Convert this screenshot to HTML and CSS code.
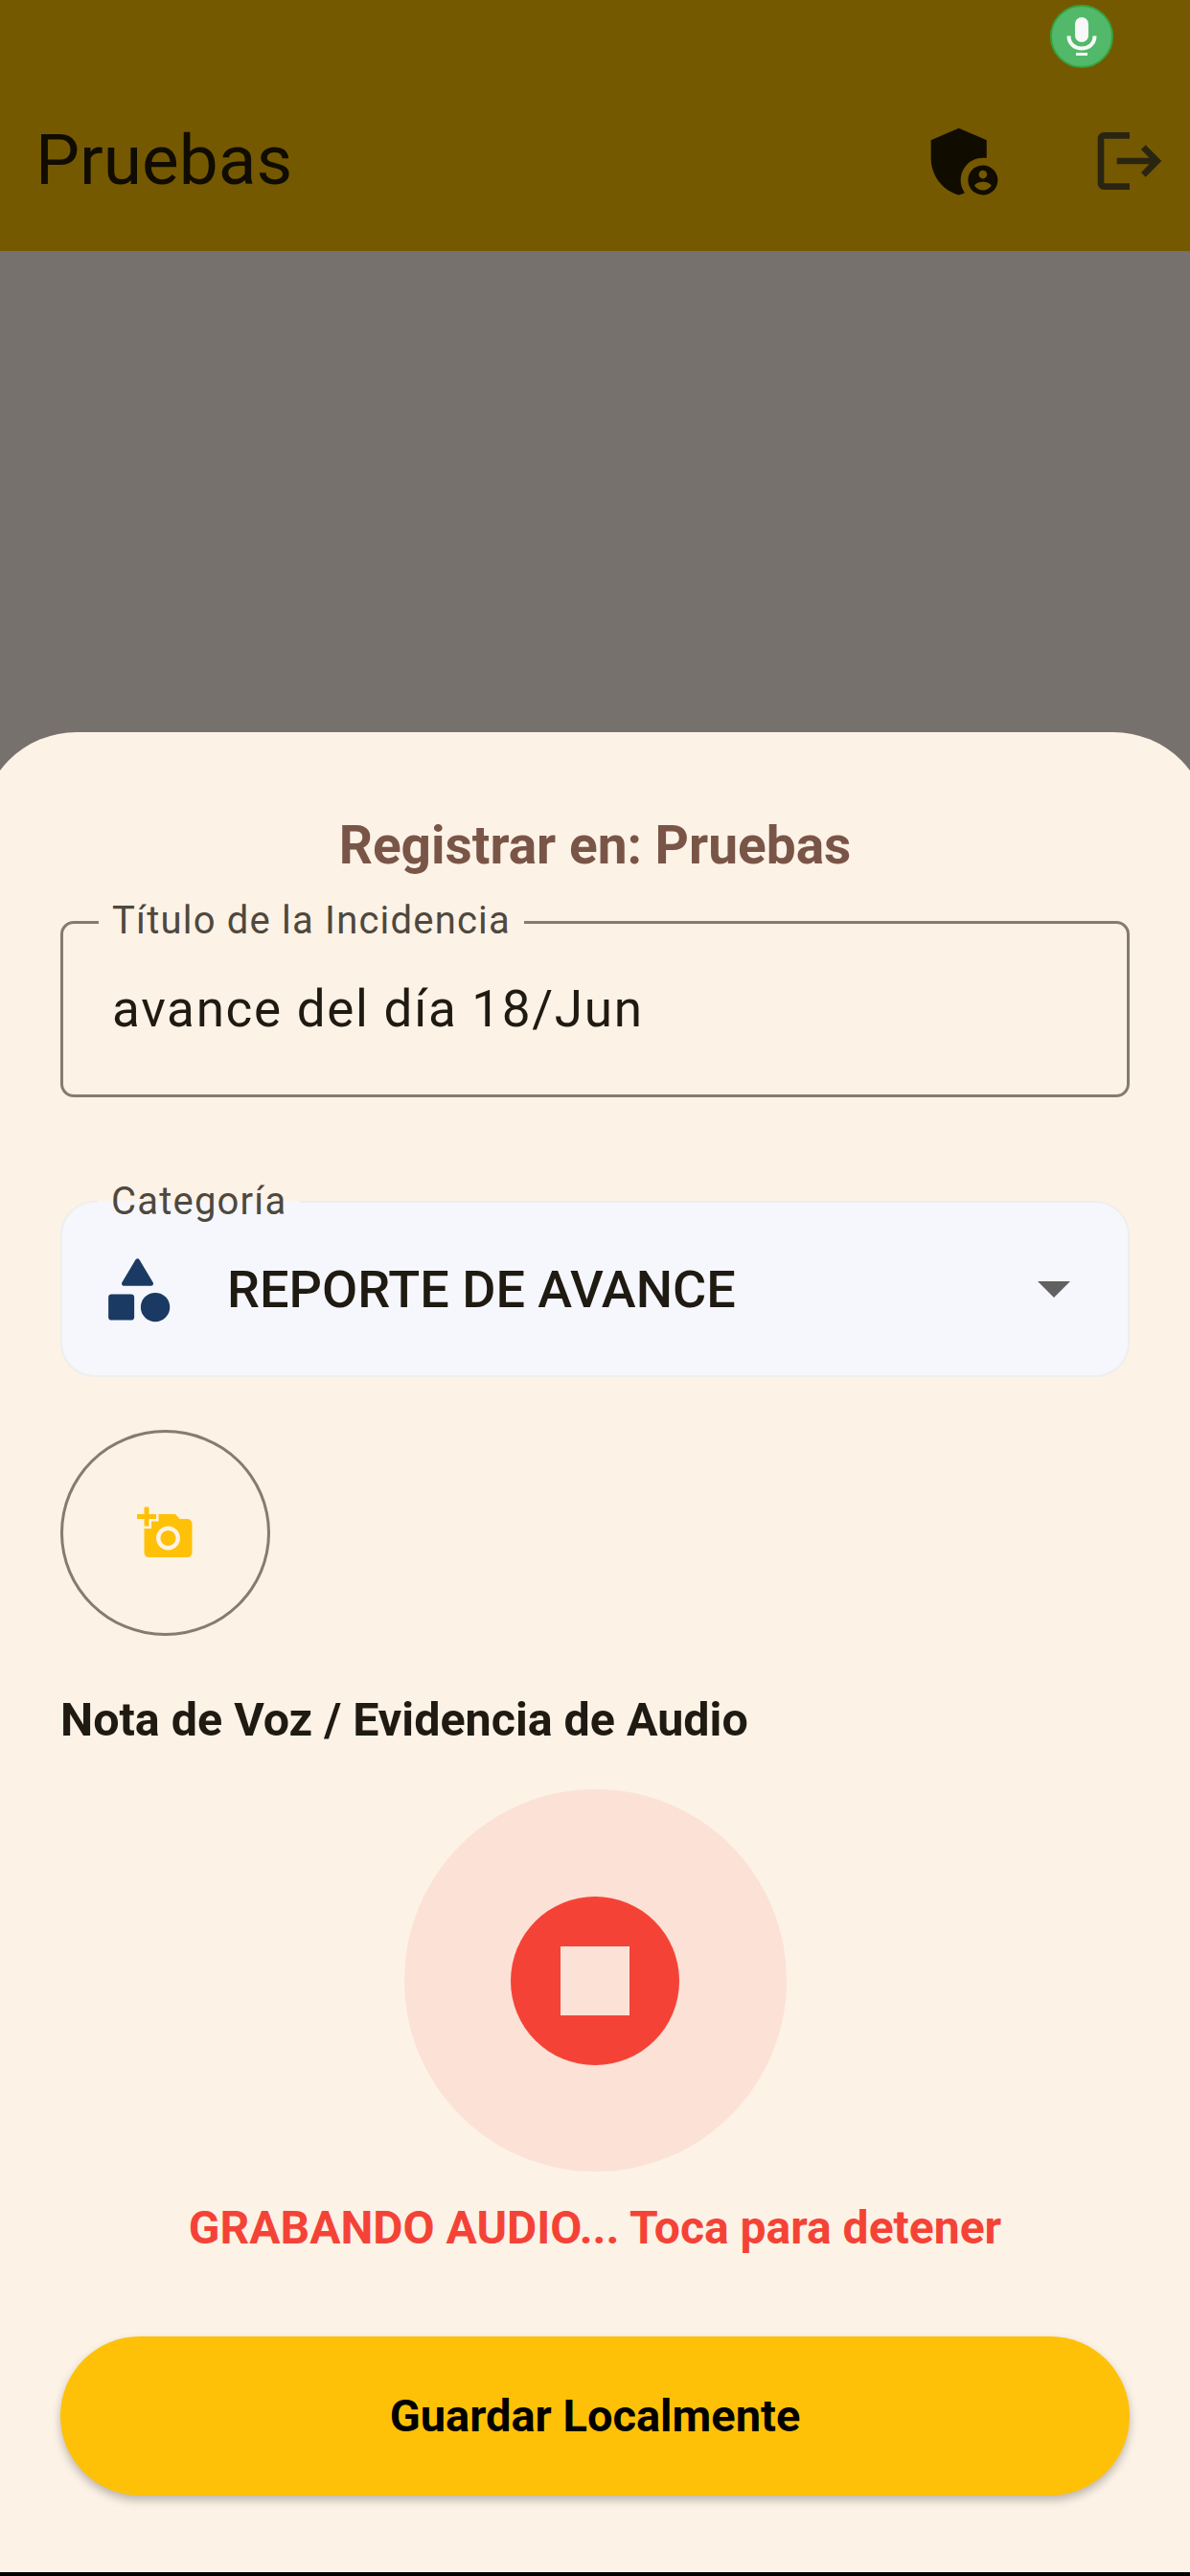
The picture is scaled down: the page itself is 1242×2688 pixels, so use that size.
FILE: index.html
```html
<!DOCTYPE html>
<html lang="es">

<head>
    <meta charset="UTF-8">
    <title>Pruebas</title>
    <link rel="stylesheet" href="styles.css">
</head>

<body>
    <div class="page">
        <!-- barra superior, oscurecida por el velo -->
        <header class="appbar">
            <h1 class="appbar-title">Pruebas</h1>
            <svg class="icon-admin" viewBox="0 0 24 24">
                <path d="M17 11c.34 0 .67.04 1 .09V6.27L10.5 3 3 6.27v4.91c0 4.54 3.2 8.79 7.5 9.82.55-.13 1.08-.32 1.6-.55-.69-.98-1.1-2.17-1.1-3.45 0-3.31 2.69-6 6-6z" />
                <path d="M17 13c-2.21 0-4 1.79-4 4s1.79 4 4 4 4-1.79 4-4-1.79-4-4-4zm0 1.38c.62 0 1.12.51 1.12 1.12s-.51 1.12-1.12 1.12-1.12-.51-1.12-1.12.5-1.12 1.12-1.12zm0 5.37c-.93 0-1.74-.46-2.24-1.17.05-.72 1.51-1.08 2.24-1.08s2.19.36 2.24 1.08c-.5.71-1.31 1.17-2.24 1.17z" />
            </svg>
            <svg class="icon-logout" viewBox="0 0 24 24">
                <path d="M17 7l-1.41 1.41L18.17 11H8v2h10.17l-2.58 2.58L17 17l5-5zM4 5h8V3H4c-1.1 0-2 .9-2 2v14c0 1.1.9 2 2 2h8v-2H4V5z" />
            </svg>
        </header>

        <!-- indicador de micrófono del sistema -->
        <div class="mic-dot">
            <svg viewBox="0 0 66 66">
                <rect class="mic-fill" x="26" y="13" width="14" height="26" rx="7" />
                <path class="mic-arc" d="M19.5 32.500 C19.500 41 26 45.500 33 45.500 C40 45.500 46.500 41 46.500 32.500" />
                <rect class="mic-fill" x="27" y="50" width="12" height="3" />
            </svg>
        </div>

        <div class="scrim"></div>

        <main class="sheet">
            <h2 class="sheet-title">Registrar en: Pruebas</h2>

            <div class="field field-input">
                <span class="field-label">Título de la Incidencia</span>
                <span class="field-value">avance del día 18/Jun</span>
            </div>

            <div class="field field-select">
                <span class="field-label label-notch">Categoría</span>
                <svg class="icon-category" viewBox="0 0 24 24">
                    <path d="M12 3.200 7.800 10.200h8.400z" stroke="#1b3a63" stroke-width="1.400" stroke-linejoin="round" />
                    <rect x="3" y="13.500" width="8" height="8" rx="1" />
                    <circle cx="17.500" cy="17.500" r="4.500" />
                </svg>
                <span class="select-value">REPORTE DE AVANCE</span>
                <i class="caret"></i>
            </div>

            <div class="photo-btn">
                <svg class="icon-photo" viewBox="0 0 24 24">
                    <path d="M3 4V1h2v3h3v2H5v3H3V6H0V4h3zm3 6V7h3V4h7l1.830 2H21c1.100 0 2 .9 2 2v12c0 1.100-.9 2-2 2H5c-1.100 0-2-.9-2-2V10h3zm7 9c2.760 0 5-2.240 5-5s-2.240-5-5-5-5 2.240-5 5 2.240 5 5 5zm-3.200-5c0 1.770 1.430 3.200 3.200 3.200s3.200-1.430 3.200-3.200-1.430-3.200-3.200-3.200-3.200 1.430-3.200 3.200z" />
                </svg>
            </div>

            <p class="audio-label">Nota de Voz / Evidencia de Audio</p>

            <div class="rec-halo">
                <div class="rec-btn"><i class="rec-stop"></i></div>
            </div>

            <p class="rec-status">GRABANDO AUDIO... Toca para detener</p>

            <div class="save-btn">Guardar Localmente</div>
        </main>

        <div class="nav-edge"></div>
    </div>
</body>

</html>
```

FILE: styles.css
```css
* {
    box-sizing: border-box;
}

html,
body {
    margin: 0;
    padding: 0;
}

body {
    font-family: Roboto, "Noto Sans", sans-serif;
    background-color: #000;
}

.page {
    position: relative;
    display: flex;
    flex-direction: column;
    width: 1242px;
    height: 2688px;
    overflow: hidden;
    background-color: #76716d;
}

/* barra superior */

.appbar {
    display: flex;
    align-items: center;
    flex: none;
    height: 262px;
    padding: 72px 23px 0 37px;
    background-color: #755900;
}

.appbar-title {
    flex: 1;
    margin: 0;
    font-size: 73px;
    font-weight: 400;
    line-height: 76px;
    color: #100c02;
}

.icon-admin {
    width: 93px;
    height: 93px;
    margin: 2px 86px 0 0;
    fill: #100c00;
}

.icon-logout {
    width: 80px;
    height: 80px;
    margin-top: 2px;
    fill: #2a2412;
}

.mic-dot {
    position: absolute;
    top: 5px;
    left: 1096px;
    width: 66px;
    height: 66px;
    border: 2px solid #37a33f;
    border-radius: 50%;
    background-color: #52b96a;
}

.mic-dot svg {
    display: block;
    width: 66px;
    height: 66px;
    margin: -2px;
}

.mic-fill {
    fill: #f7f9f7;
}

.mic-arc {
    fill: none;
    stroke: #f7f9f7;
    stroke-width: 4;
}

/* velo */

.scrim {
    flex: 1;
}

/* hoja inferior: un poco mas ancha que la pantalla, las esquinas quedan cortadas */

.sheet {
    flex: none;
    margin: 0 -20px;
    padding: 88px 83px 80px 83px;
    border-radius: 100px 100px 0 0;
    background-color: #fdf2e6;
}

.sheet-title {
    margin: 0 0 49px;
    font-size: 55px;
    font-weight: 700;
    line-height: 60px;
    text-align: center;
    color: #795548;
}

.field {
    position: relative;
    display: flex;
    align-items: center;
    height: 184px;
}

.field-input {
    padding-left: 51px;
    border: 3px solid #857c6e;
    border-radius: 14px;
}

.field-value {
    font-size: 53px;
    letter-spacing: 1.7px;
    color: #1f1a12;
}

.field-label {
    position: absolute;
    top: -28px;
    left: 37px;
    padding: 0 14px;
    font-size: 40px;
    line-height: 50px;
    letter-spacing: 1.2px;
    color: #4f483d;
    background-color: #fdf2e6;
}

.field-select {
    margin-top: 108px;
    padding-left: 38px;
    border: 2px solid #eeeeee;
    border-radius: 36px;
    background-color: #f5f7fc;
}

.label-notch {
    top: -26px;
    background-color: #f5f7fc;
    background-image: linear-gradient(#fdf2e6 24px, #f5f7fc 24px);
}

.icon-category {
    flex: none;
    width: 81px;
    height: 81px;
    fill: #1b3a63;
}

.select-value {
    flex: 1;
    margin-left: 53px;
    font-size: 54px;
    font-weight: 500;
    color: #1f1a12;
}

.caret {
    flex: none;
    width: 0;
    height: 0;
    margin-right: 60px;
    border-top: 17px solid #616161;
    border-left: 17px solid transparent;
    border-right: 17px solid transparent;
}

.photo-btn {
    display: flex;
    justify-content: center;
    align-items: center;
    width: 219px;
    height: 215px;
    margin-top: 55px;
    border: 3px solid #857c6e;
    border-radius: 50%;
}

.icon-photo {
    width: 60px;
    height: 60px;
    fill: #ffc107;
}

.audio-label {
    margin: 58px 0 42px;
    font-size: 48.4px;
    font-weight: 700;
    line-height: 60px;
    color: #1f1a12;
}

.rec-halo {
    display: flex;
    justify-content: center;
    align-items: center;
    width: 399px;
    height: 399px;
    margin: 0 auto;
    border-radius: 50%;
    background-color: #fce1d6;
}

.rec-btn {
    display: flex;
    justify-content: center;
    align-items: center;
    width: 176px;
    height: 176px;
    border-radius: 50%;
    background-color: #f44336;
}

.rec-stop {
    width: 72px;
    height: 72px;
    background-color: #fce1d6;
}

.rec-status {
    margin: 29px 0 83px;
    font-size: 48px;
    font-weight: 700;
    line-height: 60px;
    text-align: center;
    color: #f44336;
}

.save-btn {
    height: 166px;
    border-radius: 83px;
    font-size: 47px;
    font-weight: 700;
    line-height: 166px;
    text-align: center;
    color: #000;
    background-color: #ffc107;
    box-shadow: 0 5px 10px rgba(0, 0, 0, 0.25);
}

.nav-edge {
    flex: none;
    height: 4px;
    background-color: #000;
}
```
